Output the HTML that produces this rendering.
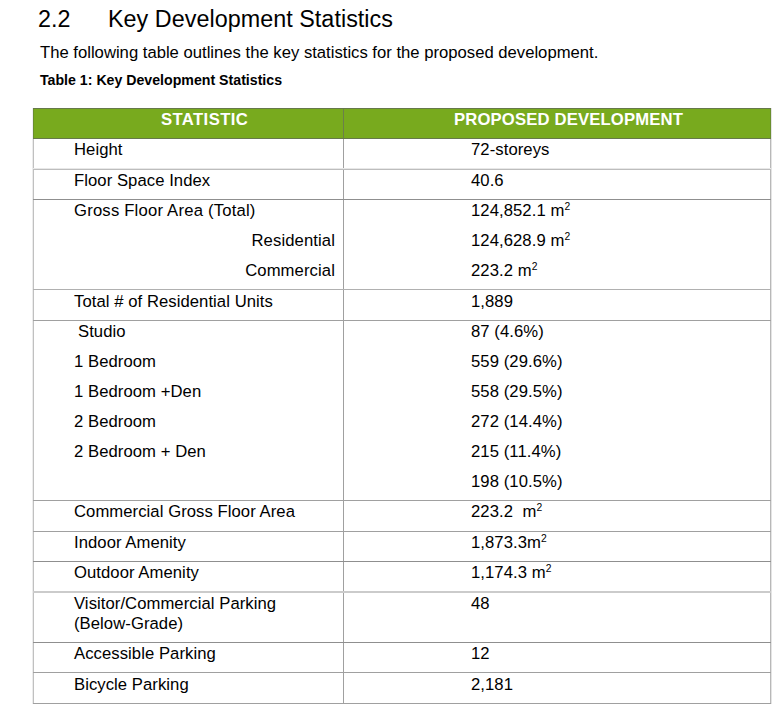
<!DOCTYPE html>
<html><head><meta charset="utf-8"><style>
html,body{margin:0;padding:0;background:#fff;width:777px;height:725px;overflow:hidden;position:relative}
.t{position:absolute;font-family:"Liberation Sans",sans-serif;line-height:1;white-space:pre;color:#000}
.t sup{font-size:0.62em;vertical-align:0;position:relative;top:-0.55em}
.l{position:absolute}
</style></head><body>
<div class="t" style="left:38px;top:8.25px;font-size:23.33px;color:#000;">2.2</div>
<div class="t" style="left:108px;top:8.25px;font-size:23.33px;letter-spacing:0.04px;color:#000;">Key Development Statistics</div>
<div class="t" style="left:40px;top:44.89px;font-size:16.67px;color:#000;">The following table outlines the key statistics for the proposed development.</div>
<div class="t" style="left:40px;top:73.01px;font-size:14.17px;font-weight:bold;color:#000;">Table 1: Key Development Statistics</div>
<div class="l" style="left:32px;top:139px;width:1px;height:565px;background:#ececec"></div>
<div class="l" style="left:33px;top:139px;width:1px;height:565px;background:#c0c0c0"></div>
<div class="l" style="left:770px;top:139px;width:1px;height:565px;background:#b8b8b8"></div>
<div class="l" style="left:771px;top:108px;width:1px;height:596px;background:#e4e4e4"></div>
<div class="l" style="left:343px;top:139px;width:1px;height:565px;background:#a0a0a0"></div>
<div class="l" style="left:32px;top:108px;width:1px;height:31px;background:#efeef4"></div>
<div class="l" style="left:33px;top:108px;width:738px;height:31px;background:#78aa1e"></div>
<div class="l" style="left:33px;top:108px;width:1px;height:31px;background:#6a8f2e"></div>
<div class="l" style="left:770px;top:108px;width:1px;height:31px;background:#6a8f2e"></div>
<div class="l" style="left:343px;top:108px;width:1px;height:31px;background:#6b7f4a"></div>
<div class="l" style="left:33px;top:108px;width:738px;height:1px;background:#66794a"></div>
<div class="l" style="left:33px;top:138px;width:738px;height:1px;background:#66794a"></div>
<div class="l" style="left:33px;top:168px;width:738px;height:1px;background:#e8e8e8"></div>
<div class="l" style="left:33px;top:169px;width:738px;height:1px;background:#bdbdbd"></div>
<div class="l" style="left:33px;top:199px;width:738px;height:1px;background:#8f8f8f"></div>
<div class="l" style="left:33px;top:289px;width:738px;height:1px;background:#b0b0b0"></div>
<div class="l" style="left:33px;top:320px;width:738px;height:1px;background:#a0a0a0"></div>
<div class="l" style="left:33px;top:500px;width:738px;height:1px;background:#a0a0a0"></div>
<div class="l" style="left:33px;top:531px;width:738px;height:1px;background:#a0a0a0"></div>
<div class="l" style="left:33px;top:561px;width:738px;height:1px;background:#8f8f8f"></div>
<div class="l" style="left:33px;top:591px;width:738px;height:1px;background:#cbcbcb"></div>
<div class="l" style="left:33px;top:592px;width:738px;height:1px;background:#cbcbcb"></div>
<div class="l" style="left:33px;top:642px;width:738px;height:1px;background:#8f8f8f"></div>
<div class="l" style="left:33px;top:672px;width:738px;height:1px;background:#a0a0a0"></div>
<div class="l" style="left:33px;top:703px;width:738px;height:1px;background:#a0a0a0"></div>
<div class="t" style="left:161px;top:111.89px;font-size:16.67px;font-weight:bold;letter-spacing:0.4px;color:#fff;">STATISTIC</div>
<div class="t" style="left:454px;top:111.89px;font-size:16.67px;font-weight:bold;letter-spacing:0.16px;color:#fff;">PROPOSED DEVELOPMENT</div>
<div class="t" style="left:74px;top:141.89px;font-size:16.67px;letter-spacing:0.06px;color:#000;">Height</div>
<div class="t" style="left:74px;top:172.89px;font-size:16.67px;letter-spacing:0.06px;color:#000;">Floor Space Index</div>
<div class="t" style="left:74px;top:202.89px;font-size:16.67px;letter-spacing:0.2px;color:#000;">Gross Floor Area (Total)</div>
<div class="t" style="right:442px;top:232.89px;font-size:16.67px;letter-spacing:0.1px;">Residential</div>
<div class="t" style="right:442px;top:262.89px;font-size:16.67px;letter-spacing:0.1px;">Commercial</div>
<div class="t" style="left:74px;top:293.89px;font-size:16.67px;letter-spacing:0.06px;color:#000;">Total # of Residential Units</div>
<div class="t" style="left:78px;top:323.89px;font-size:16.67px;letter-spacing:0.06px;color:#000;">Studio</div>
<div class="t" style="left:74px;top:353.89px;font-size:16.67px;letter-spacing:0.06px;color:#000;">1 Bedroom</div>
<div class="t" style="left:74px;top:383.89px;font-size:16.67px;letter-spacing:0.06px;color:#000;">1 Bedroom +Den</div>
<div class="t" style="left:74px;top:413.89px;font-size:16.67px;letter-spacing:0.06px;color:#000;">2 Bedroom</div>
<div class="t" style="left:74px;top:443.89px;font-size:16.67px;letter-spacing:0.06px;color:#000;">2 Bedroom + Den</div>
<div class="t" style="left:74px;top:503.89px;font-size:16.67px;letter-spacing:0.06px;color:#000;">Commercial Gross Floor Area</div>
<div class="t" style="left:74px;top:534.89px;font-size:16.67px;letter-spacing:0.06px;color:#000;">Indoor Amenity</div>
<div class="t" style="left:74px;top:564.89px;font-size:16.67px;letter-spacing:0.06px;color:#000;">Outdoor Amenity</div>
<div class="t" style="left:74px;top:595.89px;font-size:16.67px;letter-spacing:0.06px;color:#000;">Visitor/Commercial Parking</div>
<div class="t" style="left:74px;top:615.89px;font-size:16.67px;letter-spacing:0.06px;color:#000;">(Below-Grade)</div>
<div class="t" style="left:74px;top:645.89px;font-size:16.67px;letter-spacing:0.06px;color:#000;">Accessible Parking</div>
<div class="t" style="left:74px;top:676.89px;font-size:16.67px;letter-spacing:0.06px;color:#000;">Bicycle Parking</div>
<div class="t" style="left:471px;top:141.89px;font-size:16.67px;letter-spacing:0.07px;color:#000;">72-storeys</div>
<div class="t" style="left:471px;top:172.89px;font-size:16.67px;letter-spacing:0.07px;color:#000;">40.6</div>
<div class="t" style="left:471px;top:202.89px;font-size:16.67px;letter-spacing:0.07px;color:#000;">124,852.1 m<sup>2</sup></div>
<div class="t" style="left:471px;top:232.89px;font-size:16.67px;letter-spacing:0.07px;color:#000;">124,628.9 m<sup>2</sup></div>
<div class="t" style="left:471px;top:262.89px;font-size:16.67px;letter-spacing:0.07px;color:#000;">223.2 m<sup>2</sup></div>
<div class="t" style="left:471px;top:293.89px;font-size:16.67px;letter-spacing:0.07px;color:#000;">1,889</div>
<div class="t" style="left:471px;top:323.89px;font-size:16.67px;letter-spacing:0.07px;color:#000;">87 (4.6%)</div>
<div class="t" style="left:471px;top:353.89px;font-size:16.67px;letter-spacing:0.07px;color:#000;">559 (29.6%)</div>
<div class="t" style="left:471px;top:383.89px;font-size:16.67px;letter-spacing:0.07px;color:#000;">558 (29.5%)</div>
<div class="t" style="left:471px;top:413.89px;font-size:16.67px;letter-spacing:0.07px;color:#000;">272 (14.4%)</div>
<div class="t" style="left:471px;top:443.89px;font-size:16.67px;letter-spacing:0.07px;color:#000;">215 (11.4%)</div>
<div class="t" style="left:471px;top:473.89px;font-size:16.67px;letter-spacing:0.07px;color:#000;">198 (10.5%)</div>
<div class="t" style="left:471px;top:503.89px;font-size:16.67px;letter-spacing:0.07px;color:#000;">223.2&nbsp; m<sup>2</sup></div>
<div class="t" style="left:471px;top:534.89px;font-size:16.67px;letter-spacing:0.07px;color:#000;">1,873.3m<sup>2</sup></div>
<div class="t" style="left:471px;top:564.89px;font-size:16.67px;letter-spacing:0.07px;color:#000;">1,174.3 m<sup>2</sup></div>
<div class="t" style="left:471px;top:595.89px;font-size:16.67px;letter-spacing:0.07px;color:#000;">48</div>
<div class="t" style="left:471px;top:645.89px;font-size:16.67px;letter-spacing:0.07px;color:#000;">12</div>
<div class="t" style="left:471px;top:676.89px;font-size:16.67px;letter-spacing:0.07px;color:#000;">2,181</div>
</body></html>
